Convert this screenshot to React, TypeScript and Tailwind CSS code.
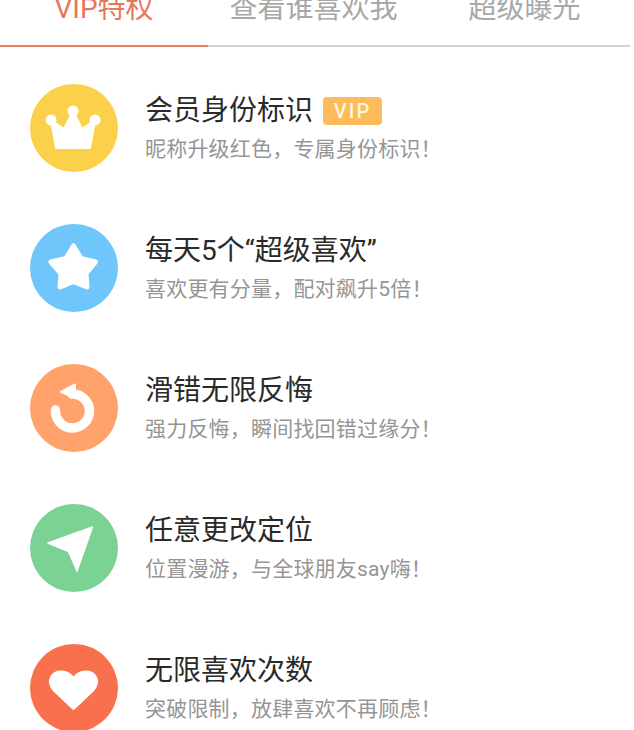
import React from 'react';

const tabs = [
  { label: 'VIP特权', active: true },
  { label: '查看谁喜欢我', active: false },
  { label: '超级曝光', active: false },
];

const CrownIcon = () => (
  <svg viewBox="0 0 88 88" className="h-[88px] w-[88px]">
    <circle cx="43" cy="27" r="5.500" fill="#fff" />
    <circle cx="21" cy="36" r="5.500" fill="#fff" />
    <circle cx="65" cy="36" r="5.500" fill="#fff" />
    <path d="M43 27 L52 45 L65 36 L60 64 H26 L21 36 L34 45 Z" fill="#fff" stroke="#fff" strokeWidth="2" strokeLinejoin="round" />
  </svg>
);

const StarIcon = () => (
  <svg viewBox="0 0 88 88" className="h-[88px] w-[88px]">
    <path d="M43.500 22 L51 34.500 L65.500 38 L56 49.500 L57 63 L43.500 57.500 L30 63 L31 49.500 L21 38 L36 34.500 Z" fill="#fff" stroke="#fff" strokeWidth="5" strokeLinejoin="round" />
  </svg>
);

const UndoIcon = () => (
  <svg viewBox="0 0 88 88" className="h-[88px] w-[88px]">
    <path d="M42 30 A 17 17 0 1 1 25.500 46" fill="none" stroke="#fff" strokeWidth="9.500" strokeLinecap="round" />
    <path d="M45 20.500 L31 28 L45 33.500 Z" fill="#fff" stroke="#fff" strokeWidth="2" strokeLinejoin="round" />
  </svg>
);

const SendIcon = () => (
  <svg viewBox="0 0 88 88" className="h-[88px] w-[88px]">
    <path d="M18 39 L62.500 23 L47 67 L38.500 47.500 Z" fill="#fff" stroke="#fff" strokeWidth="1.500" strokeLinejoin="round" />
  </svg>
);

const HeartIcon = () => (
  <svg viewBox="0 0 88 88" className="h-[88px] w-[88px]">
    <path d="M43.500 64.500 L24 46 C16 36 23 27.500 32 28 C37 28.500 41 30.500 43.500 35 C46 30.500 50 28.500 55 28 C64 27.500 71 36 63 46 Z" fill="#fff" stroke="#fff" strokeWidth="3" strokeLinejoin="round" />
  </svg>
);

const perks = [
  { title: '会员身份标识', desc: '昵称升级红色\uff0c专属身份标识\uff01', color: 'bg-[#fbd14b]', Icon: CrownIcon, vip: true },
  { title: '每天5个“超级喜欢”', desc: '喜欢更有分量\uff0c配对飙升5倍\uff01', color: 'bg-[#6ec6fb]', Icon: StarIcon, vip: false },
  { title: '滑错无限反悔', desc: '强力反悔\uff0c瞬间找回错过缘分\uff01', color: 'bg-[#ffa26b]', Icon: UndoIcon, vip: false },
  { title: '任意更改定位', desc: '位置漫游\uff0c与全球朋友say嗨\uff01', color: 'bg-[#7ad394]', Icon: SendIcon, vip: false },
  { title: '无限喜欢次数', desc: '突破限制\uff0c放肆喜欢不再顾虑\uff01', color: 'bg-[#f9704f]', Icon: HeartIcon, vip: false },
];

export default function App() {
  return (
    <div className="h-[730px] w-[634px] overflow-hidden bg-white font-['Roboto','Noto_Sans_CJK_SC',sans-serif]">
      {/* Tabs, cut off by the top of the window */}
      <div className="grid h-[47px] w-[630px] grid-cols-[208px_211px_211px] grid-rows-[47px] overflow-hidden">
        {tabs.map((tab) => (
          <div
            key={tab.label}
            className={`flex items-end justify-center border-b-2 pb-[16px] text-[28px] leading-[40px] ${
              tab.active ? 'border-[#e5805f] text-[#e5775a]' : 'border-[#d2d2d2] text-[#a8a8a8]'
            }`}
          >
            {tab.label}
          </div>
        ))}
      </div>

      {/* Perk list */}
      <div className="flex flex-col gap-[52px] pl-[30px] pt-[37px]">
        {perks.map((perk) => (
          <div key={perk.title} className="flex h-[88px] items-center gap-[27px]">
            <div className={`flex h-[88px] w-[88px] shrink-0 rounded-full ${perk.color}`}>
              <perk.Icon />
            </div>
            <div className="flex -translate-y-px flex-col gap-[4px]">
              <div className="flex items-center gap-[10px]">
                <span className="text-[28px] leading-[40px] text-[#2a2a2a]">{perk.title}</span>
                {perk.vip && (
                  <span className="flex h-[28px] w-[59px] items-center justify-center rounded-[4px] bg-[#fdbb5b] text-[20px] font-medium tracking-[2px] text-[#fff6d8]">
                    VIP
                  </span>
                )}
              </div>
              <span className="text-[21px] leading-[28px] tracking-[0.2px] text-[#959595]">{perk.desc}</span>
            </div>
          </div>
        ))}
      </div>
    </div>
  );
}
